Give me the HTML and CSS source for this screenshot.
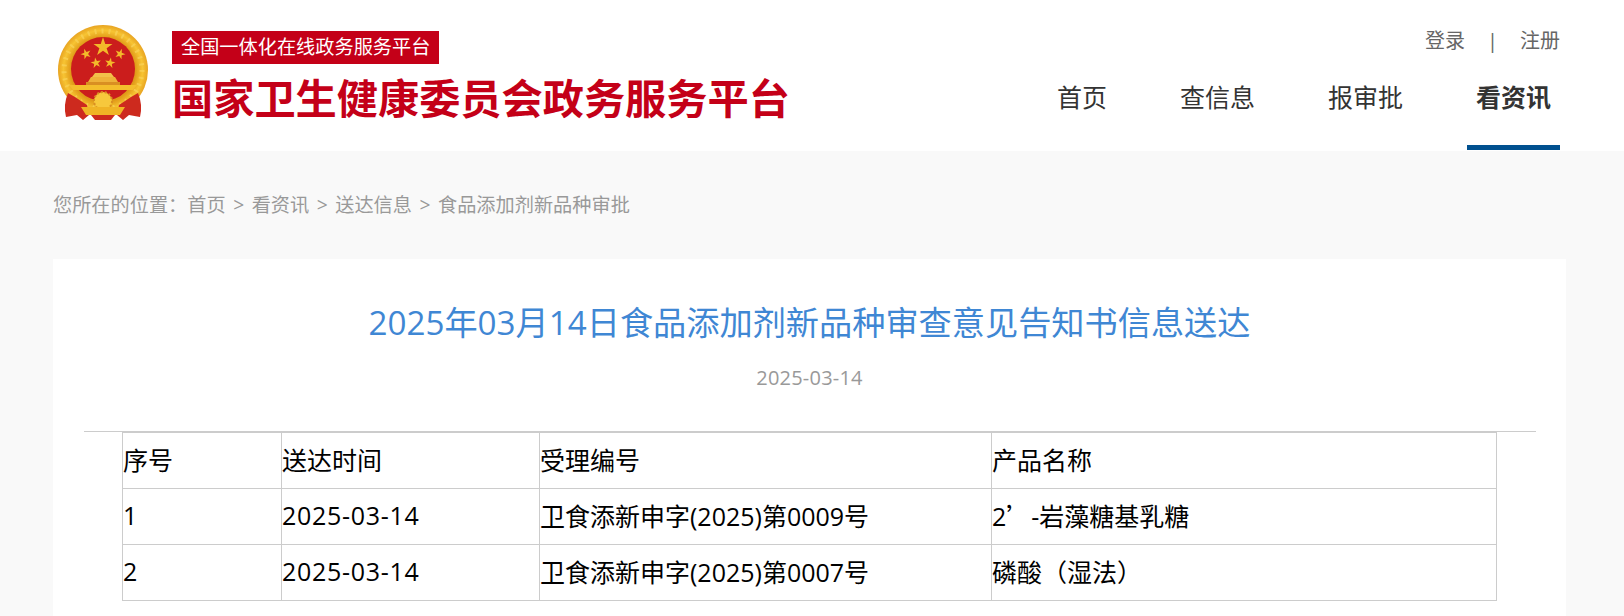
FILE: index.html
```html
<!DOCTYPE html>
<html lang="zh-CN">
<head>
    <meta charset="UTF-8">
    <title>食品添加剂新品种审查意见告知书信息送达</title>
    <link rel="stylesheet" href="styles.css">
</head>
<body>
    <header class="header">
        <div class="logo">
            <svg class="emblem" viewBox="0 0 92 96">
                <defs>
                    <radialGradient id="gold" cx="50%" cy="50%" r="50%">
                        <stop offset="72%" stop-color="#e09a18"/>
                        <stop offset="88%" stop-color="#f7c433"/>
                        <stop offset="100%" stop-color="#e8a422"/>
                    </radialGradient>
                    <polygon id="star" points="0,-1 .224,-.309 .951,-.309 .363,.118 .588,.809 0,.382 -.588,.809 -.363,.118 -.951,-.309 -.224,-.309"/>
                </defs>
                <!-- wreath -->
                <circle cx="46" cy="45" r="45" fill="url(#gold)"/>
                <circle cx="46" cy="45" r="39" fill="none" stroke="#f9d35a" stroke-width="5" stroke-dasharray="2 5" opacity="0.7"/>
                <circle cx="46" cy="44" r="32" fill="#cb1d1c"/>
                <!-- stars -->
                <use href="#star" transform="translate(46 22) scale(10)" fill="#f3b92a"/>
                <use href="#star" transform="translate(29 29) rotate(-20) scale(5.5)" fill="#f3b92a"/>
                <use href="#star" transform="translate(63 29) rotate(20) scale(5.5)" fill="#f3b92a"/>
                <use href="#star" transform="translate(39 38) rotate(-10) scale(5.5)" fill="#f3b92a"/>
                <use href="#star" transform="translate(53 38) rotate(10) scale(5.5)" fill="#f3b92a"/>
                <!-- gate -->
                <path d="M38 48 H54 L57 52 H35 Z" fill="#f2c04a"/>
                <path d="M31 57 L34 52 H58 L61 57 Z" fill="#eeb23a"/>
                <rect x="29" y="57" width="34" height="3" fill="#d98f22"/>
                <path d="M12 60 H80 L76 65 H16 Z" fill="#f4bd2c"/>
                <!-- ribbons and gear -->
                <path d="M11 68 Q6 80 9 92 L20 90 L26 95 L32 90 L30 80 L18 72 Z" fill="#cd2a1e"/>
                <path d="M81 68 Q86 80 83 92 L72 90 L66 95 L60 90 L62 80 L74 72 Z" fill="#cd2a1e"/>
                <circle cx="46" cy="76" r="9" fill="#f7c83c"/>
                <circle cx="46" cy="76" r="9" fill="none" stroke="#d98f22" stroke-width="2" stroke-dasharray="2 2"/>
                <path d="M24 82 H68 L63 90 H29 Z" fill="#f0b425"/>
                <path d="M34 90 H58 L54 95 H38 Z" fill="#cd2a1e"/>
            </svg>
            <div class="logo-text">
                <span class="logo-badge">全国一体化在线政务服务平台</span>
                <span class="logo-name">国家卫生健康委员会政务服务平台</span>
            </div>
        </div>
        <div class="header-right">
            <div class="user-links">
                <a>登录</a>
                <span class="sep">|</span>
                <a>注册</a>
            </div>
            <nav class="nav">
                <a class="nav-item">首页</a>
                <a class="nav-item">查信息</a>
                <a class="nav-item">报审批</a>
                <a class="nav-item active">看资讯</a>
            </nav>
        </div>
    </header>

    <main class="main">
        <div class="crumbs">您所在的位置：首页<span class="crumb-sep">&gt;</span>看资讯<span class="crumb-sep">&gt;</span>送达信息<span class="crumb-sep">&gt;</span>食品添加剂新品种审批</div>
        <section class="card">
            <h1 class="title">2025年03月14日食品添加剂新品种审查意见告知书信息送达</h1>
            <div class="date">2025-03-14</div>
            <div class="content">
                <table class="list">
                    <colgroup>
                        <col class="col-a"><col class="col-b"><col class="col-c"><col class="col-d">
                    </colgroup>
                    <tr><td>序号</td><td>送达时间</td><td>受理编号</td><td>产品名称</td></tr>
                    <tr><td>1</td><td class="day">2025-03-14</td><td>卫食添新申字(2025)第0009号</td><td>2<span class="cjk">’</span>-岩藻糖基乳糖</td></tr>
                    <tr><td>2</td><td class="day">2025-03-14</td><td>卫食添新申字(2025)第0007号</td><td>磷酸（湿法）</td></tr>
                </table>
            </div>
        </section>
    </main>
</body>
</html>
```
FILE: styles.css
```css
html, body {
    margin: 0;
    padding: 0;
}
body {
    height: 616px;
    overflow: hidden;
    background-color: #f9f9f9;
    font-family: "Open Sans", "Noto Sans CJK SC", sans-serif;
    color: #333;
}
.header {
    display: flex;
    justify-content: space-between;
    height: 151px;
    padding: 0 64px 0 57px;
    background-color: #fff;
}
.logo {
    display: flex;
    align-items: flex-start;
    gap: 23px;
}
.emblem {
    width: 92px;
    height: 96px;
    margin-top: 25px;
}
.logo-text {
    display: flex;
    flex-direction: column;
    align-items: flex-start;
    padding-top: 31px;
}
.logo-badge {
    height: 33px;
    padding: 0 9px;
    background-color: #c40018;
    color: #fff;
    font-size: 19.2px;
    line-height: 32px;
    white-space: nowrap;
}
.logo-name {
    margin-top: 9px;
    color: #c40018;
    font-size: 41.2px;
    font-weight: 700;
    line-height: 50px;
    white-space: nowrap;
}
.header-right {
    display: flex;
    flex-direction: column;
    align-items: flex-end;
}
.user-links {
    display: flex;
    gap: 22px;
    padding-top: 28px;
    color: #666;
    font-size: 20px;
    line-height: 26px;
}
.nav {
    display: flex;
    gap: 55px;
    margin-top: 15px;
}
.nav-item {
    height: 81px;
    padding: 0 9px;
    border-bottom: 5px solid transparent;
    font-size: 25px;
    line-height: 56px;
    box-sizing: border-box;
}
.nav-item.active {
    border-bottom-color: #00508f;
    font-weight: 700;
}
.main {
    padding: 0 58px 0 53px;
}
.crumbs {
    height: 108px;
    color: #999;
    font-size: 19.2px;
    line-height: 108px;
}
.crumb-sep {
    margin: 0 7.5px;
}
.card {
    padding-top: 39px;
    height: 360px;
    background-color: #fff;
    box-sizing: border-box;
}
.title {
    margin: 0;
    color: #3f87d4;
    font-size: 33.2px;
    font-weight: 400;
    line-height: 50px;
    text-align: center;
}
.date {
    margin-top: 17px;
    color: #999;
    font-size: 20px;
    letter-spacing: 0.2px;
    line-height: 26px;
    text-align: center;
}
.content {
    margin: 40px 30px 0 31px;
    padding: 0 39px 0 38px;
    border-top: 1px solid #ccc;
}
.list {
    width: 100%;
    border-collapse: collapse;
    table-layout: fixed;
    color: #000;
    font-size: 25px;
}
.list td {
    height: 56px;
    padding: 0 0 3px;
    border: 1px solid #ccc;
    box-sizing: border-box;
    white-space: nowrap;
}
.list .day {
    letter-spacing: 0.7px;
}
.cjk {
    font-family: "Noto Sans CJK SC", sans-serif;
}
.col-a { width: 159px; }
.col-b { width: 258px; }
.col-c { width: 452px; }
```
